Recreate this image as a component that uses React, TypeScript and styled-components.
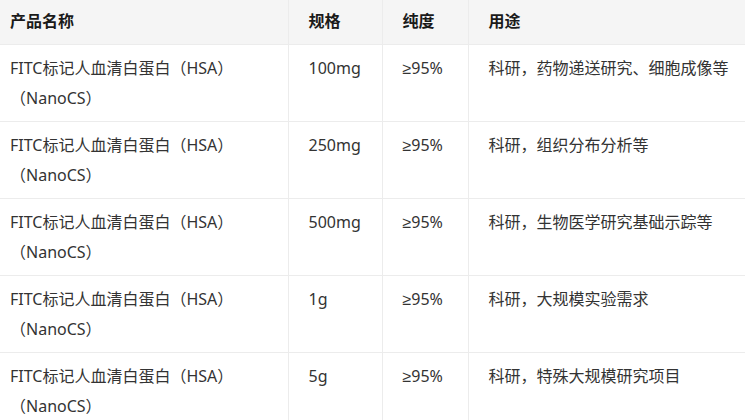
import React from "react";
import styled, { createGlobalStyle } from "styled-components";

interface IRow {
  id: number;
  name: string;
  spec: string;
  purity: string;
  usage: string;
}

const ROWS: IRow[] = [
  { id: 1, name: "FITC标记人血清白蛋白（HSA）（NanoCS）", spec: "100mg", purity: "≥95%", usage: "科研，药物递送研究、细胞成像等" },
  { id: 2, name: "FITC标记人血清白蛋白（HSA）（NanoCS）", spec: "250mg", purity: "≥95%", usage: "科研，组织分布分析等" },
  { id: 3, name: "FITC标记人血清白蛋白（HSA）（NanoCS）", spec: "500mg", purity: "≥95%", usage: "科研，生物医学研究基础示踪等" },
  { id: 4, name: "FITC标记人血清白蛋白（HSA）（NanoCS）", spec: "1g", purity: "≥95%", usage: "科研，大规模实验需求" },
  { id: 5, name: "FITC标记人血清白蛋白（HSA）（NanoCS）", spec: "5g", purity: "≥95%", usage: "科研，特殊大规模研究项目" },
];

const COLS = [288, 94, 86, 277];

const App = () => {
  return (
    <>
      <GlobalStyle />
      <Table>
        <colgroup>
          {COLS.map((w, i) => (
            <col key={i} style={{ width: w }} />
          ))}
        </colgroup>
        <thead>
          <tr>
            <Th>产品名称</Th>
            <Th>规格</Th>
            <Th>纯度</Th>
            <Th>用途</Th>
          </tr>
        </thead>
        <tbody>
          {ROWS.map((x) => (
            <tr key={x.id}>
              <Td>{x.name}</Td>
              <Td>{x.spec}</Td>
              <Td>{x.purity}</Td>
              <Td>{x.usage}</Td>
            </tr>
          ))}
        </tbody>
      </Table>
    </>
  );
};
export default App;

const GlobalStyle = createGlobalStyle`
  body {
    margin: 0;
    background: #fff;
    font-family: "Noto Sans", "Liberation Sans", "Noto Sans CJK SC", sans-serif;
    overflow: hidden;
  }
`;

const Table = styled.table`
  width: 745px;
  table-layout: fixed;
  border-collapse: collapse;
  font-size: 16px;
  line-height: 30px;
  color: #333;
`;

const Th = styled.th`
  background-color: #f5f5f5;
  text-align: left;
  font-weight: 700;
  color: #1a1a1a;
  padding: 6px 20px 8px;
  border-right: 1px solid #ececec;
  border-bottom: 1px solid #ececec;
  &:first-child {
    padding-left: 10px;
  }
  &:last-child {
    padding-right: 6px;
  }
`;

const Td = styled.td`
  vertical-align: top;
  padding: 8px 20px;
  border-right: 1px solid #ececec;
  border-bottom: 1px solid #ececec;
  &:first-child {
    padding-left: 10px;
  }
  &:last-child {
    padding-right: 6px;
  }
`;
